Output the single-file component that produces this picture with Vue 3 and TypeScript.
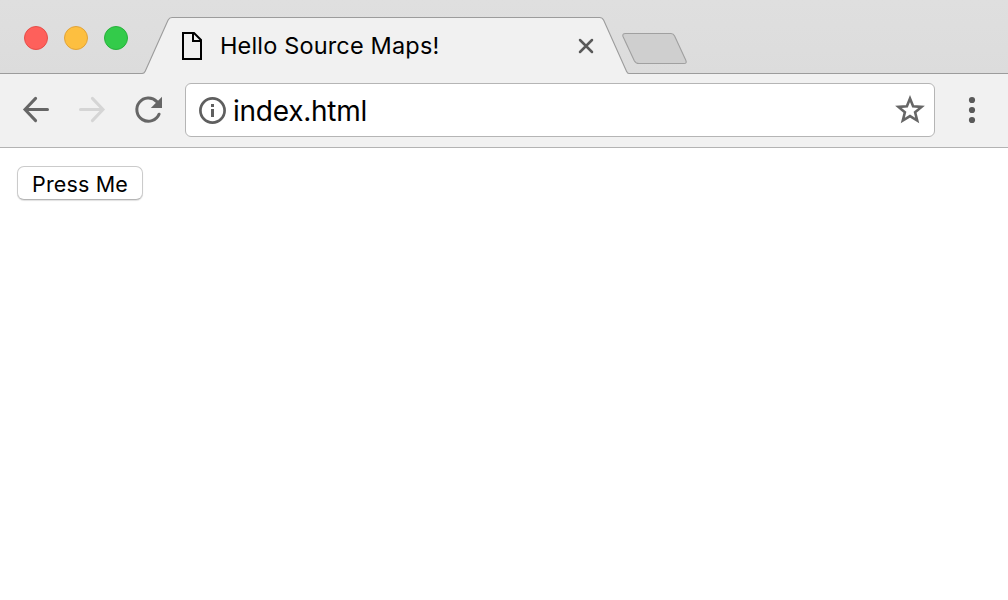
<script setup lang="ts">
import { ref } from 'vue'

const title = ref<string>('Hello Source Maps!')
const address = ref<string>('index.html')
const lights: string[] = ['close', 'minimize', 'maximize']
</script>

<template>
  <div class="window">
    <header class="strip">
      <div class="lights">
        <span v-for="light in lights" :key="light" class="light" :class="light"></span>
      </div>
      <div class="tab">
        <svg class="tab-shape" width="486" height="58" viewBox="0 0 486 58">
          <path d="M-1 58V57.5Q1.2 57.5 2.2 55.2L25 4.2Q26.4 1.5 29 1.5H456.5Q459.3 1.5 460.7 4.2L483.5 55.2Q484.5 57.5 486 57.5V58Z" fill="#f1f1f1" />
          <path d="M-1 57.5Q1.2 57.5 2.2 55.2L25 4.2Q26.4 1.5 29 1.5H456.5Q459.3 1.5 460.7 4.2L483.5 55.2Q484.5 57.5 486 57.5" fill="none" stroke="#9c9c9c" stroke-width="1.1" />
        </svg>
        <svg class="page-icon" width="22" height="30" viewBox="0 0 22 30">
          <path d="M2 2H13L20 9V28H2Z" fill="none" stroke="#000" stroke-width="2" />
          <path d="M12 2V10H20" fill="none" stroke="#000" stroke-width="2" />
        </svg>
        <span class="title">{{ title }}</span>
        <svg class="close-icon" width="16" height="16" viewBox="0 0 16 16">
          <path d="M2 2L14 14M14 2L2 14" fill="none" stroke="#5a5a5a" stroke-width="2.5" stroke-linecap="round" />
        </svg>
      </div>
      <svg class="new-tab" width="68" height="34" viewBox="0 0 68 34">
        <path d="M4.5 1.5H50Q52.4 1.5 53.6 4L64.8 28.3Q66.2 31.5 63 31.5H18Q14.8 31.5 13.3 28.7L2 4.5Q1 1.5 4.5 1.5Z" fill="#cfcfcf" stroke="#a0a0a0" stroke-width="1.1" />
      </svg>
    </header>

    <nav class="toolbar">
      <svg class="nav-icon" width="28" height="28" viewBox="0 0 28 28">
        <path d="M25.5 13.5H4M13.6 2.4L3 13.5L13.6 24.6" fill="none" stroke="#666" stroke-width="3" stroke-linecap="round" />
      </svg>
      <svg class="nav-icon" width="28" height="28" viewBox="0 0 28 28">
        <path d="M2.5 13.5H24M14.4 2.4L25 13.5L14.4 24.6" fill="none" stroke="#d5d5d5" stroke-width="3" stroke-linecap="round" />
      </svg>
      <svg class="nav-icon" width="28" height="28" viewBox="0 0 28 28">
        <path d="M22.8 5.6A11.6 11.6 0 1 0 25.1 18.2" fill="none" stroke="#666" stroke-width="3" stroke-linecap="round" />
        <path d="M28 0.7V12H16.8Z" fill="#666" />
      </svg>
      <div class="omnibox">
        <svg class="info" width="28" height="28" viewBox="0 0 28 28">
          <circle cx="14.5" cy="14.5" r="12.1" fill="none" stroke="#5f5f5f" stroke-width="2.7" />
          <path d="M13 8H16V11H13ZM13 13H16V21H13Z" fill="#5f5f5f" />
        </svg>
        <span class="address">{{ address }}</span>
        <svg class="star" width="30" height="30" viewBox="0 0 30 30">
          <path d="M15 3.5L18.1 11.2L26.6 11.9L20.1 17.3L22.2 25.5L15 21.1L7.8 25.5L9.9 17.3L3.4 11.9L11.9 11.2Z" fill="none" stroke="#666" stroke-width="2.6" />
        </svg>
      </div>
      <svg class="menu" width="8" height="28" viewBox="0 0 8 28">
        <circle cx="4" cy="4" r="3.1" fill="#5a5a5a" />
        <circle cx="4" cy="14" r="3.1" fill="#5a5a5a" />
        <circle cx="4" cy="24" r="3.1" fill="#5a5a5a" />
      </svg>
    </nav>

    <main class="page">
      <button class="press" type="button">Press Me</button>
    </main>
  </div>
</template>

<style>
body {
  margin: 0;
  background: #fff;
}
</style>

<style scoped>
.window {
  width: 1008px;
  height: 600px;
  overflow: hidden;
  background: #fff;
  color: #000;
  font-family: Inter, "Liberation Sans", sans-serif;
}
.strip {
  display: flex;
  box-sizing: border-box;
  height: 74px;
  background: linear-gradient(#dfdfdf, #dcdcdc);
  box-shadow: inset 0 -1px #9c9c9c;
}
.lights {
  display: flex;
  gap: 16px;
  width: 119px;
  padding: 26px 0 0 24px;
}
.light {
  box-sizing: border-box;
  width: 24px;
  height: 24px;
  border: 1px solid;
  border-radius: 50%;
}
.close {
  background: #fe605b;
  border-color: #e64e49;
}
.minimize {
  background: #fdbf40;
  border-color: #e1a339;
}
.maximize {
  background: #33cb4a;
  border-color: #27b13b;
}
.tab {
  position: relative;
  display: flex;
  align-items: center;
  box-sizing: border-box;
  width: 486px;
  height: 58px;
  margin-top: 16px;
  padding: 0 35px 0 38px;
}
.tab-shape {
  position: absolute;
  left: 0;
  top: 0;
  overflow: visible;
}
.page-icon,
.title,
.close-icon {
  position: relative;
}
.page-icon {
  margin-top: 2px;
}
.title {
  margin: 2px 0 0 17px;
  font-size: 23.5px;
  letter-spacing: 0.16px;
  line-height: 30px;
  white-space: nowrap;
}
.close-icon {
  margin-left: auto;
  margin-top: 2px;
}
.new-tab {
  margin: 32px 0 0 -8px;
}
.toolbar {
  display: flex;
  align-items: center;
  gap: 28px;
  box-sizing: border-box;
  height: 74px;
  padding: 0 32px 2px 22px;
  background: #f1f1f1;
  border-bottom: 1px solid #b3b3b3;
}
.nav-icon {
  flex: none;
}
.omnibox {
  display: flex;
  align-items: center;
  flex: none;
  box-sizing: border-box;
  width: 750px;
  height: 54px;
  margin-left: -5px;
  padding: 0 9px 0 12px;
  background: #fff;
  border: 1px solid #b5b5b5;
  border-radius: 6px;
}
.address {
  margin: 2px 0 0 7px;
  font-size: 28px;
  letter-spacing: -0.25px;
  line-height: 36px;
}
.star {
  margin-left: auto;
}
.menu {
  flex: none;
  margin-left: 5px;
}
.page {
  display: flex;
  padding: 18px 17px;
}
.press {
  box-sizing: border-box;
  width: 126px;
  height: 34px;
  padding: 2px 0 0;
  background: #fff;
  border: 1px solid #cbcbcb;
  border-bottom-color: #b5b5b5;
  border-radius: 7px;
  box-shadow: 0 1px 1px rgba(0, 0, 0, 0.12);
  color: #000;
  font-family: inherit;
  font-size: 21.5px;
  letter-spacing: 0.15px;
  line-height: 30px;
}
</style>
